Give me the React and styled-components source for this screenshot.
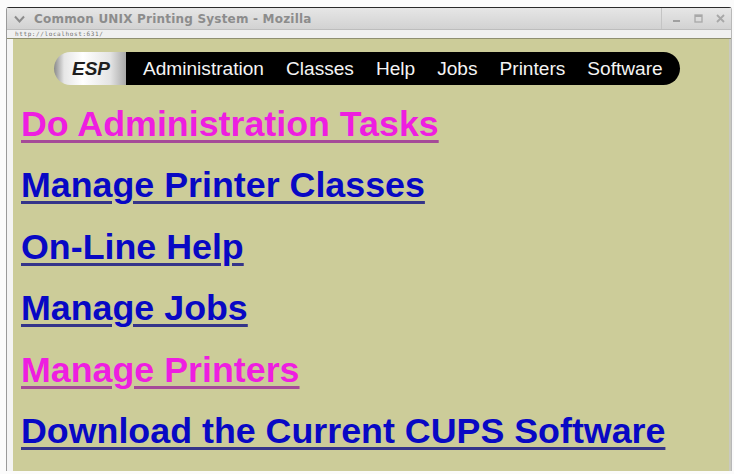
import React from "react";
import styled, { createGlobalStyle } from "styled-components";

const GlobalStyle = createGlobalStyle`
  html, body {
    margin: 0;
    padding: 0;
    background: #ffffff;
  }
  body {
    font-family: "Liberation Sans", Arial, sans-serif;
  }
`;

const Screen = styled.div`
  width: 734px;
  height: 474px;
  overflow: hidden;
  background: #fbfbfb;
  padding: 7px 0 0 6px;
  box-sizing: border-box;
`;

const Window = styled.div`
  width: 726px;
  height: 464px;
  display: flex;
  flex-direction: column;
  border-top: 1px solid #2a2a2a;
  border-left: 1px solid #9a9a9a;
  border-right: 1px solid #b8b8b8;
  border-radius: 3px 3px 0 0;
  background: #e8e8e8;
  box-sizing: border-box;
`;

const TitleBar = styled.div`
  height: 21px;
  display: flex;
  align-items: center;
  padding: 0 6px 0 7px;
  background: linear-gradient(#e6e6e6, #d2d2d2);
  border-bottom: 1px solid #bdbdbd;
  color: #8c8c8c;
  font-family: "DejaVu Sans", sans-serif;
  font-weight: bold;
  font-size: 12px;
`;

const TitleText = styled.span`
  flex: 1;
  margin-left: 9px;
  letter-spacing: 0.2px;
`;

const WinButtons = styled.div`
  display: flex;
  gap: 13px;
  align-items: center;
  padding-left: 10px;
  border-left: 1px solid #c4c4c4;
  height: 100%;
`;

const StatusStrip = styled.div`
  height: 8px;
  background: #f0f0f0;
  border-bottom: 1px solid #8f8f70;
  display: flex;
  align-items: center;
  padding-left: 8px;
  font-family: "DejaVu Sans Mono", monospace;
  font-size: 6px;
  line-height: 8px;
  color: #707070;
  letter-spacing: 0.6px;
  overflow: hidden;
`;

const Body = styled.div`
  flex: 1;
  display: flex;
  background: #f4f4f4;
  padding-left: 6px;
`;

const Page = styled.div`
  flex: 1;
  background: #cccc99;
  display: flex;
  flex-direction: column;
  border-right: 2px solid #c9c9c0;
`;

const Nav = styled.div`
  display: flex;
  margin: 13px 0 0 41px;
  height: 33px;
`;

const Logo = styled.div`
  width: 70px;
  display: flex;
  align-items: center;
  justify-content: center;
  border-radius: 17px 0 0 17px;
  background: linear-gradient(90deg, #8a8a8a 0%, #e6e6e6 14%, #ffffff 40%, #e4e4e4 78%, #a8a8a8 100%);
  font-weight: bold;
  font-style: italic;
  font-size: 19px;
  color: #1e1e1e;
  padding-left: 2px;
`;

const Tabs = styled.div`
  display: flex;
  align-items: center;
  gap: 22px;
  padding: 0 17px;
  background: #000000;
  border-radius: 0 17px 17px 0;
`;

const Tab = styled.a`
  color: #f4f4f4;
  font-size: 19.1px;
  text-decoration: none;
`;

const Links = styled.div`
  display: flex;
  flex-direction: column;
  padding: 9px 0 0 8px;
`;

const BigLink = styled.a`
  display: block;
  align-self: flex-start;
  font-weight: bold;
  font-size: 35.8px;
  line-height: 61.4px;
  color: ${(p) => (p.$visited ? "#ee1ee0" : "#0808c4")};
  text-decoration: underline;
  text-decoration-color: ${(p) => (p.$visited ? "#a54a98" : "#34348a")};
  text-decoration-thickness: 2.5px;
  text-underline-offset: 4px;
`;

const tabs = ["Administration", "Classes", "Help", "Jobs", "Printers", "Software"];

const links = [
  { label: "Do Administration Tasks", visited: true },
  { label: "Manage Printer Classes", visited: false },
  { label: "On-Line Help", visited: false },
  { label: "Manage Jobs", visited: false },
  { label: "Manage Printers", visited: true },
  { label: "Download the Current CUPS Software", visited: false },
];

function Chevron() {
  return (
    <svg width="11" height="8" viewBox="0 0 11 8">
      <path d="M1 1.5 L5.5 6.5 L10 1.5" fill="none" stroke="#8c8c8c" strokeWidth="2" />
    </svg>
  );
}

function MinIcon() {
  return (
    <svg width="9" height="9" viewBox="0 0 9 9">
      <rect x="1" y="6" width="7" height="2" fill="#a0a0a0" />
    </svg>
  );
}

function MaxIcon() {
  return (
    <svg width="9" height="9" viewBox="0 0 9 9">
      <rect x="1" y="1" width="7" height="7" fill="none" stroke="#a8a8a8" strokeWidth="1.3" />
      <rect x="1" y="1" width="7" height="2" fill="#a8a8a8" />
    </svg>
  );
}

function CloseIcon() {
  return (
    <svg width="9" height="9" viewBox="0 0 9 9">
      <path d="M1 1 L8 8 M8 1 L1 8" stroke="#a8a8a8" strokeWidth="1.8" />
    </svg>
  );
}

export default function App() {
  return (
    <>
      <GlobalStyle />
      <Screen>
        <Window>
          <TitleBar>
            <Chevron />
            <TitleText>Common UNIX Printing System - Mozilla</TitleText>
            <WinButtons>
              <MinIcon />
              <MaxIcon />
              <CloseIcon />
            </WinButtons>
          </TitleBar>
          <StatusStrip>http://localhost:631/</StatusStrip>
          <Body>
            <Page>
              <Nav>
                <Logo>ESP</Logo>
                <Tabs>
                  {tabs.map((t) => (
                    <Tab key={t} href="#">
                      {t}
                    </Tab>
                  ))}
                </Tabs>
              </Nav>
              <Links>
                {links.map((l) => (
                  <BigLink key={l.label} href="#" $visited={l.visited}>
                    {l.label}
                  </BigLink>
                ))}
              </Links>
            </Page>
          </Body>
        </Window>
      </Screen>
    </>
  );
}
